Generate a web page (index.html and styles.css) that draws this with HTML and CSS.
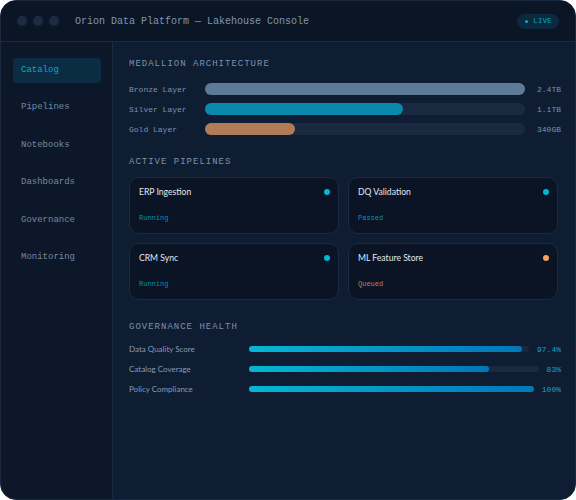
FILE: index.html
```html
<!DOCTYPE html>
<html lang="en">

<head>
    <meta charset="UTF-8">
    <meta name="viewport" content="width=device-width, initial-scale=1.0">
    <title>Orion Data Platform</title>
    <link rel="stylesheet" href="styles.css">
</head>

<body>
    <div class="window">
        <div class="titlebar">
            <div class="dots">
                <span class="dot"></span>
                <span class="dot"></span>
                <span class="dot"></span>
            </div>
            <div class="title">Orion Data Platform — Lakehouse Console</div>
            <div class="live"><span class="live-dot"></span>LIVE</div>
        </div>

        <div class="body">
            <nav class="sidebar">
                <a class="nav-item active">Catalog</a>
                <a class="nav-item">Pipelines</a>
                <a class="nav-item">Notebooks</a>
                <a class="nav-item">Dashboards</a>
                <a class="nav-item">Governance</a>
                <a class="nav-item">Monitoring</a>
            </nav>

            <main class="main">
                <h3 class="section-title">Medallion Architecture</h3>
                <div class="layers">
                    <span class="layer-label">Bronze Layer</span>
                    <div class="layer-track"><div class="layer-fill bronze" style="width: 100%"></div></div>
                    <span class="layer-value">2.4TB</span>

                    <span class="layer-label">Silver Layer</span>
                    <div class="layer-track"><div class="layer-fill silver" style="width: 62%"></div></div>
                    <span class="layer-value">1.1TB</span>

                    <span class="layer-label">Gold Layer</span>
                    <div class="layer-track"><div class="layer-fill gold" style="width: 28%"></div></div>
                    <span class="layer-value">340GB</span>
                </div>

                <h3 class="section-title">Active Pipelines</h3>
                <div class="pipelines">
                    <div class="card">
                        <div class="card-head">
                            <span class="card-name">ERP Ingestion</span>
                            <span class="status-dot"></span>
                        </div>
                        <span class="card-status">Running</span>
                    </div>
                    <div class="card">
                        <div class="card-head">
                            <span class="card-name">DQ Validation</span>
                            <span class="status-dot"></span>
                        </div>
                        <span class="card-status">Passed</span>
                    </div>
                    <div class="card">
                        <div class="card-head">
                            <span class="card-name">CRM Sync</span>
                            <span class="status-dot"></span>
                        </div>
                        <span class="card-status">Running</span>
                    </div>
                    <div class="card">
                        <div class="card-head">
                            <span class="card-name">ML Feature Store</span>
                            <span class="status-dot queued"></span>
                        </div>
                        <span class="card-status queued">Queued</span>
                    </div>
                </div>

                <h3 class="section-title">Governance Health</h3>
                <div class="health">
                    <div class="health-row">
                        <span class="health-label">Data Quality Score</span>
                        <div class="health-track"><div class="health-fill" style="width: 97.4%"></div></div>
                        <span class="health-value">97.4%</span>
                    </div>
                    <div class="health-row">
                        <span class="health-label">Catalog Coverage</span>
                        <div class="health-track"><div class="health-fill" style="width: 83%"></div></div>
                        <span class="health-value">83%</span>
                    </div>
                    <div class="health-row">
                        <span class="health-label">Policy Compliance</span>
                        <div class="health-track"><div class="health-fill" style="width: 100%"></div></div>
                        <span class="health-value">100%</span>
                    </div>
                </div>
            </main>
        </div>
    </div>
</body>

</html>
```

FILE: styles.css
```css
body {
    margin: 0;
    background-color: #ffffff;
    font-family: "Liberation Mono", monospace;
}

.window {
    height: 500px;
    box-sizing: border-box;
    display: flex;
    flex-direction: column;
    background-color: #0c1829;
    border: 1px solid #1a2940;
    border-radius: 16px;
    overflow: hidden;
}

/* title bar */
.titlebar {
    height: 40px;
    flex-shrink: 0;
    display: flex;
    align-items: center;
    padding: 0 16px;
    background-color: #0a1526;
    border-bottom: 1px solid #1a2a42;
}

.dots {
    display: flex;
    gap: 6px;
}

.dot {
    width: 10px;
    height: 10px;
    border-radius: 50%;
    background-color: #1c2b44;
}

.title {
    margin-left: 16px;
    font-size: 10px;
    color: #8195ae;
    flex: 1;
}

.live {
    display: flex;
    align-items: center;
    gap: 5px;
    height: 15px;
    padding: 0 7px 0 8px;
    border-radius: 8px;
    background-color: #0b2a3d;
    color: #0ea5c9;
    font-size: 7.3px;
    letter-spacing: 0.3px;
}

.live-dot {
    width: 3px;
    height: 3px;
    border-radius: 50%;
    background-color: #0ea5c9;
}

.body {
    flex: 1;
    display: flex;
}

/* sidebar */
.sidebar {
    width: 112px;
    flex-shrink: 0;
    box-sizing: border-box;
    padding: 16px 11px 0 12px;
    display: flex;
    flex-direction: column;
    gap: 12.5px;
    border-right: 1px solid #1a2a42;
}

.nav-item {
    height: 25px;
    box-sizing: border-box;
    display: flex;
    align-items: center;
    padding: 0 0 2px 8px;
    border-radius: 4px;
    font-size: 9px;
    color: #7289a4;
}

.nav-item.active {
    background-color: #0b2d43;
    color: #0ea5c9;
}

/* main */
.main {
    flex: 1;
    padding: 17px 17px 0 16px;
    background-color: #0f1d33;
}

.section-title {
    margin: 0 0 10px 0;
    font-size: 9px;
    font-weight: normal;
    letter-spacing: 1px;
    text-transform: uppercase;
    color: #7b91ab;
}

.layers {
    display: grid;
    grid-template-columns: 64px 1fr auto;
    grid-auto-rows: 20px;
    column-gap: 12px;
    align-items: center;
    margin: 0 -3px 18px 0;
}

.layer-label,
.layer-value {
    font-size: 8px;
    color: #7b91ab;
}

.layer-track {
    height: 12px;
    border-radius: 6px;
    background-color: #1a2940;
}

.layer-fill {
    height: 100%;
    border-radius: 6px;
}

.bronze {
    background-color: #5e7a99;
}

.silver {
    background-color: #0a8aab;
}

.gold {
    background-color: #b07c58;
}

.pipelines {
    display: grid;
    grid-template-columns: 1fr 1fr;
    gap: 9px;
    margin-bottom: 22px;
}

.card {
    height: 57px;
    box-sizing: border-box;
    padding: 9px 8px 0 9px;
    border: 1px solid #1b2a42;
    border-radius: 10px;
    background-color: #0a1425;
}

.card-head {
    display: flex;
    justify-content: space-between;
    align-items: center;
    margin-bottom: 17px;
}

.card-name {
    font-family: "Lato", sans-serif;
    font-size: 8.6px;
    color: #e2e8f0;
}

.status-dot {
    width: 6px;
    height: 6px;
    border-radius: 50%;
    background-color: #06b6d4;
}

.status-dot.queued {
    background-color: #f4a261;
}

.card-status {
    display: block;
    font-size: 7px;
    color: #0b8fb0;
}

.card-status.queued {
    color: #c08050;
}

.health {
    display: flex;
    flex-direction: column;
    gap: 8px;
    margin: 11px -3px 0 0;
}

.health-row {
    height: 12px;
    display: flex;
    align-items: center;
    gap: 8px;
}

.health-label {
    width: 112px;
    flex-shrink: 0;
    font-family: "Lato", sans-serif;
    font-size: 8px;
    color: #8a9bb3;
}

.health-track {
    flex: 1;
    height: 6px;
    border-radius: 3px;
    background-color: #1a2940;
}

.health-fill {
    height: 100%;
    border-radius: 3px;
    background: linear-gradient(90deg, #06b6d4, #0277b8);
}

.health-value {
    font-size: 8px;
    color: #0ea5c9;
}
```
